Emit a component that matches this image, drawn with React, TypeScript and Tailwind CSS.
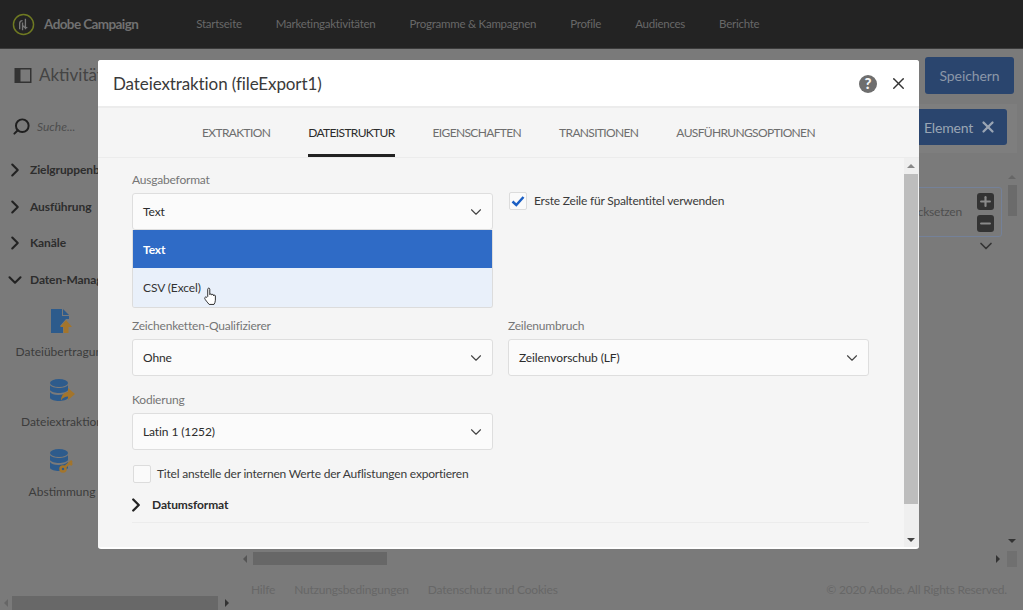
import { ChevronDown, ChevronRight, Plus, Minus, X, Search } from "lucide-react";

const font = { fontFamily: 'Lato, "Noto Sans", sans-serif' };

const navItems = ["Startseite", "Marketingaktivitäten", "Programme & Kampagnen", "Profile", "Audiences", "Berichte"];
const tabs = ["EXTRAKTION", "DATEISTRUKTUR", "EIGENSCHAFTEN", "TRANSITIONEN", "AUSFÜHRUNGSOPTIONEN"];

function Logo() {
  return (
    <svg width="23" height="23" viewBox="0 0 24 24" fill="none">
      <circle cx="12" cy="12" r="10.500" stroke="#6f7a22" strokeWidth="1.500" />
      <path d="M8 17V11c0-2 1-3 3-3M11 18V10M14 17V6M16 15c-2 1-4 0-4-2" stroke="#777" strokeWidth="1.400" />
    </svg>
  );
}

function FileUpIcon() {
  return (
    <svg width="22" height="24" viewBox="0 0 22 24">
      <path d="M0 0h11v7h7v3h-3l-6 7h3v7H0z" fill="#2d5b8c" />
      <path d="M12 0l6 6h-6z" fill="#2d5b8c" />
      <path d="M15 11l6 7h-3.500v6h-5v-6H9z" fill="#a3752c" />
    </svg>
  );
}

function DbIcon({ variant }: { variant: "share" | "key" }) {
  return (
    <svg width="26" height="24" viewBox="0 0 26 24">
      <ellipse cx="10" cy="4" rx="9" ry="4" fill="#2d5b8c" />
      <path d="M1 6c2 4 16 4 18 0v5c-2 4-16 4-18 0z" fill="#2d5b8c" />
      <path d="M1 13c2 4 14 4 18 0v6c-2 4-16 4-18 0z" fill="#2d5b8c" />
      {variant === "share" ? (
        <path d="M19 9l7 6-7 6v-3.500c-3 0-5 1-7 4 0-5 3-8 7-8.500z" fill="#a3752c" />
      ) : (
        <g fill="none" stroke="#a3752c" strokeWidth="2.500">
          <circle cx="14" cy="20" r="2.500" />
          <path d="M16 18l7-6M21 14l2 2" />
        </g>
      )}
    </svg>
  );
}

function SideGroup({ label, open }: { label: string; open?: boolean }) {
  return (
    <div className="flex h-[36.500px] items-center gap-[4px] pl-[4px] text-[12px] font-bold tracking-[-0.1px] text-[#2d2d2d]">
      {open ? (
        <ChevronDown size={22} strokeWidth={2.300} className="text-[#222]" />
      ) : (
        <ChevronRight size={22} strokeWidth={2.300} className="text-[#222]" />
      )}
      <span className="whitespace-nowrap">{label}</span>
    </div>
  );
}

function SideActivity({ label, icon }: { label: string; icon: React.ReactNode }) {
  return (
    <div className="flex h-[70px] w-[124px] flex-col items-center gap-[10px] whitespace-nowrap text-[12px] text-[#3c3c3c]">
      {icon}
      <span>{label}</span>
    </div>
  );
}

function Field({ label, value, className }: { label: string; value: string; className?: string }) {
  return (
    <div className={className}>
      <div className="mb-[4px] text-[12px] leading-[18px] tracking-[-0.2px] text-[#757575]">{label}</div>
      <div className="flex h-[37px] items-center justify-between rounded-[3px] border border-[#dedede] bg-[#fbfbfb] pl-[10px] pr-[7px] text-[12px] tracking-[-0.1px] text-[#2c2c2c]">
        <span>{value}</span>
        <ChevronDown size={18} strokeWidth={1.500} className="text-[#444]" />
      </div>
    </div>
  );
}

function HandCursor() {
  return (
    <svg width="14" height="19" viewBox="0 0 15 20" className="absolute left-[71px] top-[19px]">
      <path
        d="M4 10V2.200c0-1.600 2.200-1.600 2.200 0V8c0-1 2-1 2 0v.5c0-1 2-1 2 0v.8c0-1 2-1 2 0v4.700c0 2-.8 3-1.500 4.500H5.500C4 16.500 1 13.500.8 12c-.2-1.500 1.500-2 2.200-1z"
        fill="#fff"
        stroke="#222"
        strokeWidth="1"
        strokeLinejoin="round"
      />
    </svg>
  );
}

function Modal() {
  return (
    <div className="absolute left-[98px] top-[60px] flex h-[489px] w-[821px] flex-col overflow-hidden rounded-[3px] border-b-2 border-white bg-[#f5f5f5]">
      <div className="flex h-[48px] shrink-0 items-center justify-between border-b-2 border-[#ececec] bg-white pl-[15px] pr-[11px] pt-[1px]">
        <span className="text-[17px] tracking-[-0.1px] text-[#3a3a3a]">Dateiextraktion (fileExport1)</span>
        <div className="flex items-center gap-[12px]">
          <span className="flex h-[18px] w-[18px] items-center justify-center rounded-full bg-[#6e6e6e] text-[15px] font-black leading-none text-[#f5f5f5]">
            ?
          </span>
          <X size={19} strokeWidth={1.800} className="text-[#333]" />
        </div>
      </div>

      <div className="flex h-[50px] shrink-0 items-stretch justify-center gap-[38px] border-b border-[#ececec] text-[12px] tracking-[-0.65px]">
        {tabs.map((tab, i) => (
          <div
            key={tab}
            className={
              i === 1
                ? "flex items-center border-b-[3px] border-[#222] pt-[4px] text-[#2c2c2c]"
                : "flex items-center pt-[1px] text-[#6e6e6e]"
            }
          >
            {tab}
          </div>
        ))}
      </div>

      <div className="flex min-h-0 flex-1">
        <div className="relative min-w-0 flex-1 pl-[34px] pr-[35px] pt-[13px]">
          <div className="grid grid-cols-[361px_361px] gap-x-[15px]">
            <div className="relative">
              <Field label="Ausgabeformat" value="Text" />
              <div className="absolute left-0 right-0 top-[59px] z-10 overflow-hidden rounded-b-[3px] border border-t-0 border-[#dcdcdc] text-[12px] tracking-[-0.1px]">
                <div className="flex h-[38px] items-center bg-[#2f6bc6] pl-[10px] pt-[2px] font-bold text-white">Text</div>
                <div className="relative flex h-[39px] items-center bg-[#e9f0fa] pl-[10px] pt-[1px] text-[#333]">
                  CSV (Excel)
                  <HandCursor />
                </div>
              </div>
            </div>
            <label className="ml-[1px] mt-[20px] flex h-[20px] items-center gap-[7px] text-[12px] tracking-[-0.2px] text-[#3a3a3a]">
              <span className="flex h-[18px] w-[18px] items-center justify-center rounded-[2px] border border-[#dcdcdc] bg-[#fafafa]">
                <svg width="14" height="12" viewBox="0 0 14 12" fill="none">
                  <path d="M1.500 6.500L5.300 10 12.500 2" stroke="#1b5fc4" strokeWidth="2.500" />
                </svg>
              </span>
              Erste Zeile für Spaltentitel verwenden
            </label>

            <Field label="Zeichenketten-Qualifizierer" value="Ohne" className="mt-[87px]" />
            <Field label="Zeilenumbruch" value="Zeilenvorschub (LF)" className="mt-[87px]" />
            <Field label="Kodierung" value="Latin 1 (1252)" className="mt-[15px]" />
          </div>

          <div className="mt-[15px] flex items-center gap-[6px] text-[12px] tracking-[-0.2px] text-[#3a3a3a]">
            <span className="ml-[1px] h-[18px] w-[18px] rounded-[2px] border border-[#dcdcdc] bg-[#fafafa]" />
            Titel anstelle der internen Werte der Auflistungen exportieren
          </div>

          <div className="mt-[10px] flex h-[30px] w-[737px] items-center gap-[5px] border-b border-[#ececec] pb-[6px] text-[12px] font-bold tracking-[-0.1px] text-[#2c2c2c]">
            <ChevronRight size={22} strokeWidth={2.500} className="-ml-[7px] text-[#222]" />
            Datumsformat
          </div>
        </div>

        <div className="flex w-[15px] shrink-0 flex-col bg-[#efefef] pr-[1px]">
          <div className="flex h-[16px] items-center justify-center">
            <span className="h-0 w-0 border-x-[4px] border-b-[4px] border-x-transparent border-b-[#888]" />
          </div>
          <div className="h-[330px] bg-[#bdbdbd]" />
          <div className="flex flex-1 items-end justify-center pb-[5px]">
            <span className="h-0 w-0 border-x-[4px] border-t-[4px] border-x-transparent border-t-[#444]" />
          </div>
        </div>
      </div>
    </div>
  );
}

export default function App() {
  return (
    <div style={font} className="relative flex h-[610px] w-[1023px] flex-col overflow-hidden bg-[#7a7a7a]">
      <header className="flex h-[49px] shrink-0 items-center border-b border-[#3b3b3b] bg-[#232323] pl-[12px]">
        <Logo />
        <span className="ml-[9px] text-[13.500px] font-bold tracking-[-0.6px] text-[#717171]">Adobe Campaign</span>
        <nav className="ml-[58px] flex gap-[34px] text-[11.500px] tracking-[-0.25px] text-[#686868]">
          {navItems.map((item) => (
            <span key={item}>{item}</span>
          ))}
        </nav>
      </header>

      <div className="flex min-h-0 flex-1">
        <aside className="flex w-[238px] shrink-0 flex-col">
          <div className="flex h-[52px] shrink-0 items-center gap-[7px] pl-[14px] text-[17px] text-[#444]">
            <svg width="18" height="15" viewBox="0 0 17 15" fill="none">
              <rect x="0.750" y="0.750" width="15.500" height="13.500" stroke="#333" strokeWidth="1.500" />
              <rect x="1" y="1" width="5" height="13" fill="#333" />
            </svg>
            Aktivitäten
          </div>
          <div className="flex h-[51px] shrink-0 items-center gap-[6px] pl-[12px] text-[12px] italic text-[#4d4d4d]">
            <Search size={19} strokeWidth={2.500} className="-scale-x-100 text-[#1f1f1f]" />
            Suche...
          </div>
          <SideGroup label="Zielgruppenbestimmung" />
          <SideGroup label="Ausführung" />
          <SideGroup label="Kanäle" />
          <SideGroup label="Daten-Management" open />
          <div className="mt-[11px] flex flex-col">
            <SideActivity label="Dateiübertragung" icon={<FileUpIcon />} />
            <SideActivity label="Dateiextraktion" icon={<DbIcon variant="share" />} />
            <SideActivity label="Abstimmung" icon={<DbIcon variant="key" />} />
          </div>
          <div className="mt-auto flex h-[14px] items-center pl-[4px]">
            <span className="h-0 w-0 border-y-[4px] border-r-[4px] border-y-transparent border-r-[#666]" />
            <div className="ml-[4px] h-[14px] w-[206px] bg-[#686868]" />
            <span className="ml-[7px] h-0 w-0 border-y-[4px] border-l-[4px] border-y-transparent border-l-[#333]" />
          </div>
        </aside>

        <main className="flex min-w-0 flex-1 flex-col">
          <div className="flex h-[55px] shrink-0 items-start justify-end pr-[9px] pt-[8px]">
            <div className="flex h-[37px] w-[89px] items-center justify-center rounded-[3px] bg-[#2a456e] text-[14px] tracking-[-0.1px] text-[#8b97a8]">
              Speichern
            </div>
          </div>
          <div className="mr-[6px] flex h-[49px] shrink-0 items-start justify-end bg-[#7e7e7e] pr-[10px] pt-[5px]">
            <div className="flex h-[36px] w-[100px] items-center justify-end gap-[6px] rounded-[3px] bg-[#2a456e] pr-[10px] text-[14px] tracking-[-0.2px] text-[#9aa5b4]">
              Element
              <X size={18} strokeWidth={3} />
            </div>
          </div>
          <div className="flex min-h-0 flex-1">
            <div className="flex min-w-0 flex-1 flex-col">
              <div className="flex-1 pt-[34px]">
                <div className="flex flex-col items-end pr-[5px]">
                  <div className="flex h-[50px] w-[120px] items-center justify-end gap-[15px] rounded-[3px] border border-[#748199] pr-[7px] text-[12px] tracking-[-0.2px] text-[#4e4e4e]">
                    ücksetzen
                    <div className="flex flex-col gap-[5px]">
                      <span className="flex h-[17px] w-[17px] items-center justify-center rounded-[3px] bg-[#333] text-[#8a8a8a]">
                        <Plus size={15} strokeWidth={3.500} />
                      </span>
                      <span className="flex h-[17px] w-[17px] items-center justify-center rounded-[3px] bg-[#333] text-[#8a8a8a]">
                        <Minus size={15} strokeWidth={3.500} />
                      </span>
                    </div>
                  </div>
                  <ChevronDown size={20} strokeWidth={2} className="-mt-[1px] mr-[6px] text-[#333]" />
                </div>
              </div>
              <div className="mb-[2px] flex h-[17px] shrink-0 items-center">
                <span className="ml-[5px] h-0 w-0 border-y-[4px] border-r-[4px] border-y-transparent border-r-[#555]" />
                <div className="ml-[6px] h-[13px] w-[134px] bg-[#676767]" />
                <span className="ml-auto mr-[7px] h-0 w-0 border-y-[4px] border-l-[4px] border-y-transparent border-l-[#333]" />
              </div>
            </div>
            <div className="mr-[6px] flex w-[10px] shrink-0 flex-col items-center">
              <span className="mt-[22px] h-0 w-0 border-x-[4px] border-b-[4px] border-x-transparent border-b-[#666]" />
              <div className="mt-[6px] h-[31px] w-[9px] bg-[#6b6b6b]" />
              <span className="mb-[8px] mt-auto h-0 w-0 border-x-[4px] border-t-[4px] border-x-transparent border-t-[#333]" />
              <div className="mb-[2px] h-[16px] w-[10px] bg-[#707070]" />
            </div>
          </div>
          <footer className="flex h-[41px] shrink-0 items-center justify-between pl-[13px] pr-[16px] text-[12px] tracking-[-0.2px] text-[#676767]">
            <div className="flex gap-[19px]">
              <span>Hilfe</span>
              <span>Nutzungsbedingungen</span>
              <span>Datenschutz und Cookies</span>
            </div>
            <span>© 2020 Adobe. All Rights Reserved.</span>
          </footer>
        </main>
      </div>

      <Modal />
    </div>
  );
}
